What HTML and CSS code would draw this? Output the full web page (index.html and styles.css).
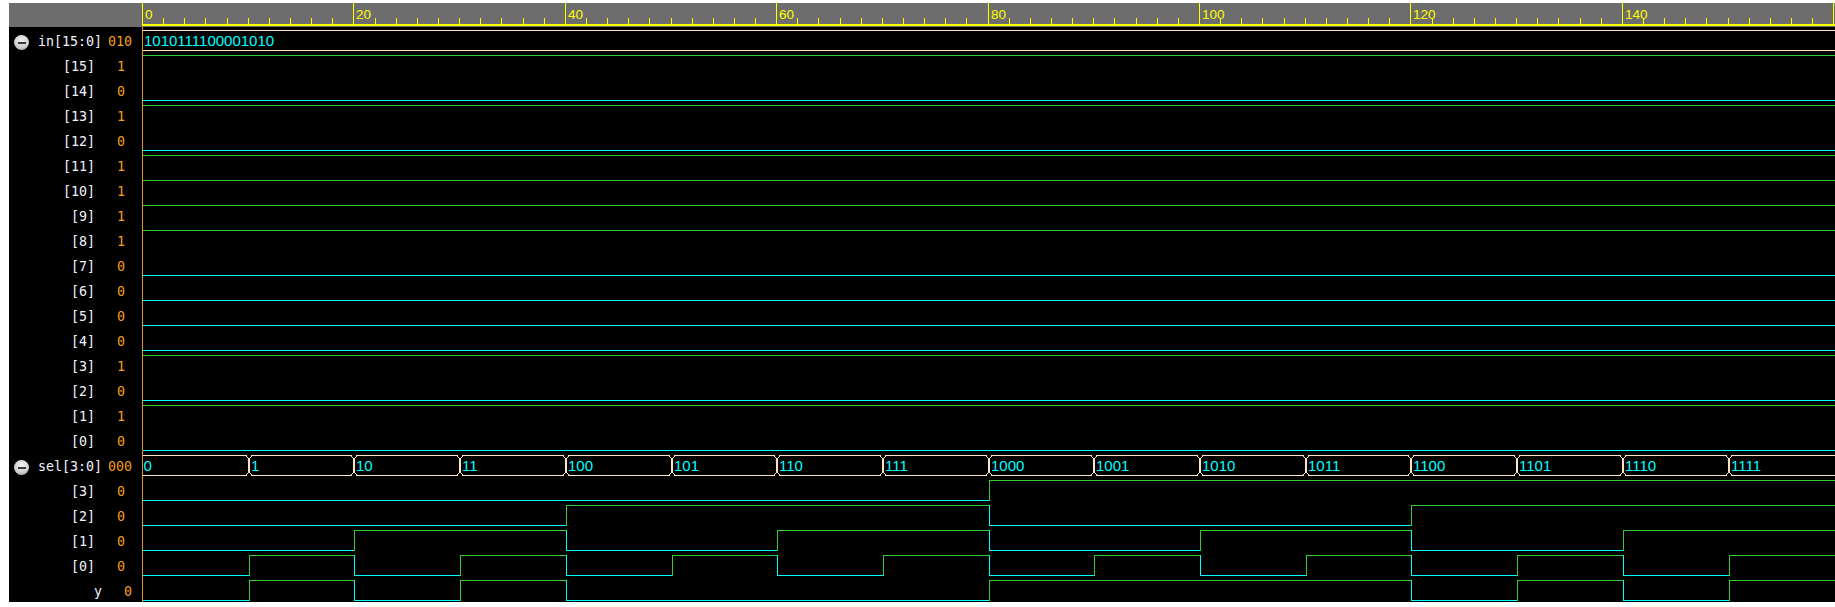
FILE: index.html
```html
<!DOCTYPE html>
<html>
<head>
<meta charset="utf-8">
<title>Waveform viewer</title>
<link rel="stylesheet" href="styles.css">
</head>
<body>
<div class="viewer">
  <div class="header">
    <div class="header-names"></div>
    <svg class="ruler" width="1693" height="24" viewBox="0 0 1693 24">
      <rect class="ruler-base" x="0" y="21" width="1693" height="2"/>
      <path class="tick" d="M21.5 15V21M42.5 15V21M63.5 15V21M85.5 15V21M106.5 15V21M127.5 15V21M148.5 15V21M169.5 15V21M190.5 15V21M233.5 15V21M254.5 15V21M275.5 15V21M296.5 15V21M317.5 15V21M338.5 15V21M359.5 15V21M381.5 15V21M402.5 15V21M444.5 15V21M465.5 15V21M486.5 15V21M507.5 15V21M529.5 15V21M550.5 15V21M571.5 15V21M592.5 15V21M613.5 15V21M655.5 15V21M676.5 15V21M698.5 15V21M719.5 15V21M740.5 15V21M761.5 15V21M782.5 15V21M803.5 15V21M824.5 15V21M867.5 15V21M888.5 15V21M909.5 15V21M930.5 15V21M951.5 15V21M972.5 15V21M994.5 15V21M1015.5 15V21M1036.5 15V21M1078.5 15V21M1099.5 15V21M1120.5 15V21M1142.5 15V21M1163.5 15V21M1184.5 15V21M1205.5 15V21M1226.5 15V21M1247.5 15V21M1290.5 15V21M1311.5 15V21M1332.5 15V21M1353.5 15V21M1374.5 15V21M1395.5 15V21M1416.5 15V21M1438.5 15V21M1459.5 15V21M1501.5 15V21M1522.5 15V21M1543.5 15V21M1564.5 15V21M1586.5 15V21M1607.5 15V21M1628.5 15V21M1649.5 15V21M1670.5 15V21"/>
      <path class="tick" d="M0.5 0V23M211.5 0V23M423.5 0V23M634.5 0V23M846.5 0V23M1057.5 0V23M1268.5 0V23M1480.5 0V23M1691.5 0V23"/>
      <text class="ruler-label" x="3" y="15.5">0</text>
      <text class="ruler-label" x="214" y="15.5">20</text>
      <text class="ruler-label" x="426" y="15.5">40</text>
      <text class="ruler-label" x="637" y="15.5">60</text>
      <text class="ruler-label" x="849" y="15.5">80</text>
      <text class="ruler-label" x="1060" y="15.5">100</text>
      <text class="ruler-label" x="1271" y="15.5">120</text>
      <text class="ruler-label" x="1483" y="15.5">140</text>
    </svg>
  </div>
  <div class="main">
    <div class="names">
      <div class="sig top"><span class="toggle"></span><span class="name">in[15:0]</span><span class="val">010</span></div>
      <div class="sig child"><span class="name">[15]</span><span class="val">1</span></div>
      <div class="sig child"><span class="name">[14]</span><span class="val">0</span></div>
      <div class="sig child"><span class="name">[13]</span><span class="val">1</span></div>
      <div class="sig child"><span class="name">[12]</span><span class="val">0</span></div>
      <div class="sig child"><span class="name">[11]</span><span class="val">1</span></div>
      <div class="sig child"><span class="name">[10]</span><span class="val">1</span></div>
      <div class="sig child"><span class="name">[9]</span><span class="val">1</span></div>
      <div class="sig child"><span class="name">[8]</span><span class="val">1</span></div>
      <div class="sig child"><span class="name">[7]</span><span class="val">0</span></div>
      <div class="sig child"><span class="name">[6]</span><span class="val">0</span></div>
      <div class="sig child"><span class="name">[5]</span><span class="val">0</span></div>
      <div class="sig child"><span class="name">[4]</span><span class="val">0</span></div>
      <div class="sig child"><span class="name">[3]</span><span class="val">1</span></div>
      <div class="sig child"><span class="name">[2]</span><span class="val">0</span></div>
      <div class="sig child"><span class="name">[1]</span><span class="val">1</span></div>
      <div class="sig child"><span class="name">[0]</span><span class="val">0</span></div>
      <div class="sig top"><span class="toggle"></span><span class="name">sel[3:0]</span><span class="val">000</span></div>
      <div class="sig child"><span class="name">[3]</span><span class="val">0</span></div>
      <div class="sig child"><span class="name">[2]</span><span class="val">0</span></div>
      <div class="sig child"><span class="name">[1]</span><span class="val">0</span></div>
      <div class="sig child"><span class="name">[0]</span><span class="val">0</span></div>
      <div class="sig top"><span class="name">y</span><span class="val">0</span></div>
    </div>
    <svg class="waves" width="1692" height="575" viewBox="0 0 1692 575">
      <!-- in[15:0] bus -->
      <path class="bus" d="M0 3.5H1692M0 23.5H1692"/>
      <text class="busval" x="1" y="19">1010111100001010</text>
      <!-- in bits -->
      <path class="hi" d="M0 28.5H1692M0 78.5H1692M0 128.5H1692M0 153.5H1692M0 178.5H1692M0 203.5H1692M0 328.5H1692M0 378.5H1692"/>
      <path class="lo" d="M0 73.5H1692M0 123.5H1692M0 248.5H1692M0 273.5H1692M0 298.5H1692M0 323.5H1692M0 373.5H1692M0 423.5H1692"/>
      <!-- sel bus -->
      <path class="bus" d="M0 428.5H103L105.5 431.5V445.5L103 448.5H0
        M106.5 431.5L109 428.5H208L210.5 431.5V445.5L208 448.5H109L106.5 445.5Z
        M211.5 431.5L214 428.5H314L316.5 431.5V445.5L314 448.5H214L211.5 445.5Z
        M317.5 431.5L320 428.5H420L422.5 431.5V445.5L420 448.5H320L317.5 445.5Z
        M423.5 431.5L426 428.5H526L528.5 431.5V445.5L526 448.5H426L423.5 445.5Z
        M529.5 431.5L532 428.5H631L633.5 431.5V445.5L631 448.5H532L529.5 445.5Z
        M634.5 431.5L637 428.5H737L739.5 431.5V445.5L737 448.5H637L634.5 445.5Z
        M740.5 431.5L743 428.5H843L845.5 431.5V445.5L843 448.5H743L740.5 445.5Z
        M846.5 431.5L849 428.5H948L950.5 431.5V445.5L948 448.5H849L846.5 445.5Z
        M951.5 431.5L954 428.5H1054L1056.5 431.5V445.5L1054 448.5H954L951.5 445.5Z
        M1057.5 431.5L1060 428.5H1160L1162.5 431.5V445.5L1160 448.5H1060L1057.5 445.5Z
        M1163.5 431.5L1166 428.5H1265L1267.5 431.5V445.5L1265 448.5H1166L1163.5 445.5Z
        M1268.5 431.5L1271 428.5H1371L1373.5 431.5V445.5L1371 448.5H1271L1268.5 445.5Z
        M1374.5 431.5L1377 428.5H1477L1479.5 431.5V445.5L1477 448.5H1377L1374.5 445.5Z
        M1480.5 431.5L1483 428.5H1583L1585.5 431.5V445.5L1583 448.5H1483L1480.5 445.5Z
        M1692 428.5H1589L1586.5 431.5V445.5L1589 448.5H1692"/>
      <text class="busval" x="0.5" y="444">0</text>
      <text class="busval" x="108" y="444">1</text>
      <text class="busval" x="213" y="444">10</text>
      <text class="busval" x="319" y="444">11</text>
      <text class="busval" x="425" y="444">100</text>
      <text class="busval" x="531" y="444">101</text>
      <text class="busval" x="636" y="444">110</text>
      <text class="busval" x="742" y="444">111</text>
      <text class="busval" x="848" y="444">1000</text>
      <text class="busval" x="953" y="444">1001</text>
      <text class="busval" x="1059" y="444">1010</text>
      <text class="busval" x="1165" y="444">1011</text>
      <text class="busval" x="1270" y="444">1100</text>
      <text class="busval" x="1376" y="444">1101</text>
      <text class="busval" x="1482" y="444">1110</text>
      <text class="busval" x="1588" y="444">1111</text>
      <!-- sel[3] -->
      <path class="lo" d="M0 473.5H846"/>
      <path class="hi" d="M846.5 474V453.5H1692"/>
      <!-- sel[2] -->
      <path class="lo" d="M0 498.5H423M846.5 478V498.5H1268"/>
      <path class="hi" d="M423.5 499V478.5H846M1268.5 499V478.5H1692"/>
      <!-- sel[1] -->
      <path class="lo" d="M0 523.5H211M423.5 503V523.5H634M846.5 503V523.5H1057M1268.5 503V523.5H1480"/>
      <path class="hi" d="M211.5 524V503.5H423M634.5 524V503.5H846M1057.5 524V503.5H1268M1480.5 524V503.5H1692"/>
      <!-- sel[0] -->
      <path class="lo" d="M0 548.5H106M211.5 528V548.5H317M423.5 528V548.5H529M634.5 528V548.5H740M846.5 528V548.5H951M1057.5 528V548.5H1163M1268.5 528V548.5H1374M1480.5 528V548.5H1586"/>
      <path class="hi" d="M106.5 549V528.5H211M317.5 549V528.5H423M529.5 549V528.5H634M740.5 549V528.5H846M951.5 549V528.5H1057M1163.5 549V528.5H1268M1374.5 549V528.5H1480M1586.5 549V528.5H1692"/>
      <!-- y -->
      <path class="lo" d="M0 573.5H106M211.5 553V573.5H317M423.5 553V573.5H846M1268.5 553V573.5H1374M1480.5 553V573.5H1586"/>
      <path class="hi" d="M106.5 574V553.5H211M317.5 574V553.5H423M846.5 574V553.5H1268M1374.5 574V553.5H1480M1586.5 574V553.5H1692"/>
    </svg>
  </div>
</div>
</body>
</html>
```

FILE: styles.css
```css
html, body {
  margin: 0;
  padding: 0;
  background: #ffffff;
}

.viewer {
  margin: 3px 0 0 9px;
  width: 1826px;
}

.header {
  display: flex;
  height: 24px;
  background: #6d6d6d;
}

.header-names {
  width: 133px;
  flex: none;
}

.ruler {
  display: block;
  flex: none;
  shape-rendering: crispEdges;
}

.ruler-base {
  fill: #ffff00;
}

.tick {
  stroke: #ffff00;
  stroke-width: 1;
  fill: none;
}

.ruler-label {
  fill: #ffff00;
  font-family: "Liberation Sans", Arial, sans-serif;
  font-size: 13.5px;
}

.main {
  display: flex;
  height: 575px;
}

.names {
  width: 133px;
  flex: none;
  background: #000000;
  border-right: 1px solid #e3961c;
}

.sig {
  display: flex;
  height: 25px;
  box-sizing: border-box;
  padding: 5px 10px 0 5px;
  font-family: "DejaVu Sans Mono", "Liberation Mono", monospace;
  font-size: 13.3px;
  line-height: 20px;
}

.sig.child {
  padding-right: 17px;
}

.toggle {
  flex: none;
  width: 15px;
  height: 15px;
  margin-top: 3px;
  border-radius: 50%;
  background: radial-gradient(circle at 50% 35%, #f2f2f2 0%, #d2d2d2 55%, #9a9a9a 100%);
  display: flex;
  align-items: center;
  justify-content: center;
}

.toggle::after {
  content: "";
  display: block;
  width: 8px;
  height: 2px;
  background: #3a3a3a;
}

.name {
  flex: 1;
  text-align: right;
  color: #f2f2ff;
  white-space: pre;
}

.val {
  flex: none;
  width: 30px;
  text-align: right;
  color: #f59d1c;
}

.waves {
  display: block;
  flex: none;
  background: #000000;
  shape-rendering: crispEdges;
}

.hi {
  stroke: #32cd32;
  stroke-width: 1;
  fill: none;
}

.lo {
  stroke: #00ffff;
  stroke-width: 1;
  fill: none;
}

.bus {
  stroke: #ffe4c4;
  stroke-width: 1;
  fill: none;
}

.busval {
  fill: #00ffff;
  font-family: "Liberation Sans", Arial, sans-serif;
  font-size: 15px;
}
```
